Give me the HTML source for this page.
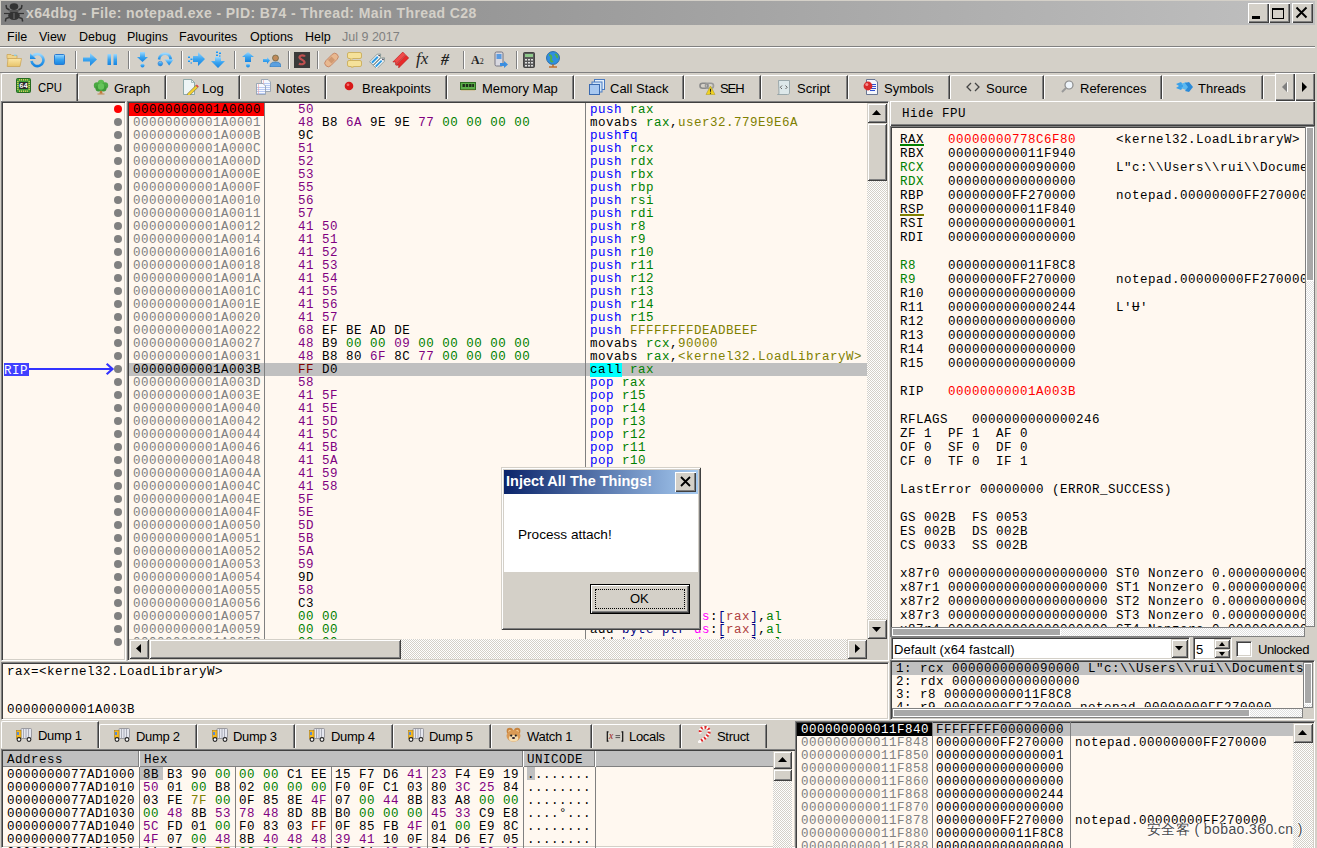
<!DOCTYPE html>
<html><head><meta charset="utf-8"><style>
*{margin:0;padding:0;box-sizing:border-box}
html,body{width:1317px;height:848px;overflow:hidden}
body{background:#d4d0c8;position:relative;font-family:"Liberation Sans",sans-serif;color:#000}
.a{position:absolute}
.s{font-family:"Liberation Sans",sans-serif;font-size:12px;white-space:pre;line-height:14px}
.m{font-family:"Liberation Mono",monospace;font-size:12.5px;letter-spacing:0.5px;white-space:pre;line-height:13px}
.r{font-family:"Liberation Mono",monospace;font-size:12.5px;letter-spacing:0.5px;white-space:pre;line-height:14px}
</style></head><body>
<div class="a" style="left:1px;top:1px;width:1314px;height:24px;background:linear-gradient(to right,#808080,#c0c0c0)"></div>
<div class="a s" style="left:26px;top:5px;color:#d4d0c8;font-weight:bold;font-size:14px;letter-spacing:0.4px;line-height:16px">x64dbg - File: notepad.exe - PID: B74 - Thread: Main Thread C28</div>
<svg class="a" style="left:0px;top:0px" width="28" height="26" viewBox="0 0 28 26">
<g fill="#333" stroke="#333">
<ellipse cx="14" cy="6.6" rx="4.3" ry="3.4" stroke="none"/>
<ellipse cx="14" cy="15.6" rx="5.8" ry="4.4" stroke="none"/>
<rect x="9.5" y="10" width="9" height="2" stroke="none" fill="#555"/>
<path d="M4 13.5h20" stroke-width="1.2" fill="none"/>
<path d="M9.5 10L6.6 8.2 6 5M18.5 10L21.4 8.2 22 5M9 17.5L6 18.5 5.3 21.5M19 17.5L22 18.5 22.7 21.5" stroke-width="1.5" fill="none"/>
</g><path d="M14 13v6" stroke="#6a6a6a" stroke-width="1.2"/></svg>
<div class="a" style="left:1248px;top:3px;width:21px;height:20px;background:#d4d0c8;box-shadow:inset 1px 1px 0 #fff,inset -1px -1px 0 #404040,inset -2px -2px 0 #808080;"></div>
<div class="a" style="left:1269px;top:3px;width:21px;height:20px;background:#d4d0c8;box-shadow:inset 1px 1px 0 #fff,inset -1px -1px 0 #404040,inset -2px -2px 0 #808080;"></div>
<div class="a" style="left:1292px;top:3px;width:21px;height:20px;background:#d4d0c8;box-shadow:inset 1px 1px 0 #fff,inset -1px -1px 0 #404040,inset -2px -2px 0 #808080;"></div>
<div class="a" style="left:1252px;top:16px;width:8px;height:3px;background:#000"></div>
<div class="a" style="left:1272px;top:8px;width:12px;height:11px;border:1px solid #000;border-top-width:2px"></div>
<svg class="a" style="left:1295px;top:6px" width="13" height="13" viewBox="0 0 13 13"><path d="M1.5 1.5L11.5 11.5M11.5 1.5L1.5 11.5" stroke="#000" stroke-width="1.9"/></svg>
<div class="a s" style="left:7px;top:30px;font-size:12.5px">File</div>
<div class="a s" style="left:39px;top:30px;font-size:12.5px">View</div>
<div class="a s" style="left:79px;top:30px;font-size:12.5px">Debug</div>
<div class="a s" style="left:127px;top:30px;font-size:12.5px">Plugins</div>
<div class="a s" style="left:179px;top:30px;font-size:12.5px">Favourites</div>
<div class="a s" style="left:250px;top:30px;font-size:12.5px">Options</div>
<div class="a s" style="left:305px;top:30px;font-size:12.5px">Help</div>
<div class="a s" style="left:342px;top:30px;font-size:12.5px;color:#808080">Jul 9 2017</div>
<div class="a" style="left:0px;top:46px;width:1315px;height:1px;background:#808080"></div>
<div class="a" style="left:0px;top:47px;width:1315px;height:1px;background:#fff"></div>
<svg width="0" height="0" style="position:absolute"><defs><linearGradient id="gb" x1="0" y1="0" x2="0" y2="1"><stop offset="0" stop-color="#9ad8ff"/><stop offset=".5" stop-color="#3aa4f0"/><stop offset="1" stop-color="#1784e0"/></linearGradient><linearGradient id="gf" x1="0" y1="0" x2="0" y2="1"><stop offset="0" stop-color="#fbe7a8"/><stop offset="1" stop-color="#e8c46a"/></linearGradient></defs></svg>
<svg class="a" style="left:6px;top:53px" width="16" height="14" viewBox="0 0 16 14"><path d="M1 1.5h4l1 1h5v3H1z" fill="#f0d48a" stroke="#c8a050" stroke-width=".7"/><rect x="8" y="1.6" width="2.5" height="1.2" fill="#7fd0f0"/><path d="M2 5.5h13.5l-1.5 8H1.2z" fill="url(#gf)" stroke="#c8a050" stroke-width=".7"/></svg>
<svg class="a" style="left:29px;top:52px" width="16" height="16" viewBox="0 0 16 16"><path d="M4 4A6 6 0 1 1 2.5 9" fill="none" stroke="url(#gb)" stroke-width="2.6"/><path d="M1 1v6h6z" fill="url(#gb)"/></svg>
<svg class="a" style="left:54px;top:54px" width="11" height="11" viewBox="0 0 11 11"><rect x=".5" y=".5" width="10" height="10" rx="1" fill="url(#gb)" stroke="#2a7ad0" stroke-width="1"/></svg>
<div class="a" style="left:75px;top:51px;width:1px;height:18px;background:#808080"></div>
<div class="a" style="left:76px;top:51px;width:1px;height:18px;background:#fff"></div>
<svg class="a" style="left:83px;top:53px" width="14" height="13" viewBox="0 0 14 13"><path d="M0 4.5h7V0l7 6.5-7 6.5V8.5H0z" fill="url(#gb)"/></svg>
<svg class="a" style="left:107px;top:54px" width="11" height="11" viewBox="0 0 11 11"><rect x="0.5" y="0" width="3.5" height="11" fill="url(#gb)"/><rect x="6.5" y="0" width="3.5" height="11" fill="url(#gb)"/></svg>
<div class="a" style="left:128px;top:51px;width:1px;height:18px;background:#808080"></div>
<div class="a" style="left:129px;top:51px;width:1px;height:18px;background:#fff"></div>
<svg class="a" style="left:137px;top:52px" width="11" height="16" viewBox="0 0 11 16"><path d="M3 0h5v5h3l-5.5 5L0 5h3z" fill="url(#gb)"/><circle cx="5.5" cy="13.5" r="2" fill="url(#gb)"/></svg>
<svg class="a" style="left:157px;top:52px" width="17" height="15" viewBox="0 0 17 15"><path d="M2 7.5C2.5 3 6 1.5 9 1.8S14 4.5 13.5 8.5" fill="none" stroke="url(#gb)" stroke-width="2.6"/><path d="M7.5 7.3h9.3l-4.7 6.2z" fill="url(#gb)"/><circle cx="3.3" cy="11.6" r="2.3" fill="url(#gb)" stroke="#2a7ad0" stroke-width=".6"/></svg>
<div class="a" style="left:181px;top:51px;width:1px;height:18px;background:#808080"></div>
<div class="a" style="left:182px;top:51px;width:1px;height:18px;background:#fff"></div>
<svg class="a" style="left:187px;top:52px" width="18" height="15" viewBox="0 0 18 15"><path d="M6 4h5V0l7 7-7 7V10H6z" fill="url(#gb)"/><rect x="1" y="4" width="2" height="2" fill="url(#gb)"/><rect x="3.5" y="6" width="2" height="2" fill="url(#gb)"/><rect x="1" y="8" width="2" height="2" fill="url(#gb)"/><rect x="3.5" y="10" width="1.5" height="1.5" fill="url(#gb)"/></svg>
<svg class="a" style="left:211px;top:51px" width="15" height="17" viewBox="0 0 15 17"><path d="M4 6h6v4h4l-7 7-7-7h4z" fill="url(#gb)"/><rect x="5" y="0" width="2" height="2" fill="url(#gb)"/><rect x="8" y="1" width="2" height="2" fill="url(#gb)"/><rect x="5" y="3" width="2" height="2" fill="url(#gb)"/><rect x="8" y="4" width="1.5" height="1.5" fill="url(#gb)"/></svg>
<div class="a" style="left:234px;top:51px;width:1px;height:18px;background:#808080"></div>
<div class="a" style="left:235px;top:51px;width:1px;height:18px;background:#fff"></div>
<svg class="a" style="left:242px;top:52px" width="12" height="16" viewBox="0 0 12 16"><path d="M6 0l6 5H9v5H3V5H0z" fill="url(#gb)"/><circle cx="6" cy="13.5" r="2" fill="url(#gb)"/></svg>
<svg class="a" style="left:263px;top:54px" width="18" height="13" viewBox="0 0 18 13"><path d="M0 5h4V3l3 3.5-3 3.5V8H0z" fill="url(#gb)"/><circle cx="12.5" cy="4" r="3" fill="#c08a5a" stroke="#553" stroke-width=".6"/><path d="M7 13c0-4 2-5 5.5-5s5.5 1 5.5 5z" fill="#5aa0e0" stroke="#2a70b0" stroke-width=".6"/></svg>
<div class="a" style="left:288px;top:51px;width:1px;height:18px;background:#808080"></div>
<div class="a" style="left:289px;top:51px;width:1px;height:18px;background:#fff"></div>
<div class="a" style="left:294px;top:52px;width:16px;height:16px;background:#3a3a3a"></div>
<svg class="a" style="left:294px;top:52px" width="16" height="16" viewBox="0 0 16 16"><path d="M11 4.5C10 3 6 3 5.5 5S10 8 10.5 10 7 13 5 11.5" fill="none" stroke="#c05050" stroke-width="2.2"/></svg>
<div class="a" style="left:317px;top:51px;width:1px;height:18px;background:#808080"></div>
<div class="a" style="left:318px;top:51px;width:1px;height:18px;background:#fff"></div>
<svg class="a" style="left:323px;top:52px" width="17" height="16" viewBox="0 0 17 16"><g transform="rotate(-45 8.5 8)"><rect x="0.5" y="4.5" width="16" height="7" rx="3.5" fill="#e8b890" stroke="#c08060" stroke-width=".8"/><rect x="6" y="5.5" width="5" height="5" fill="#d09870"/></g></svg>
<svg class="a" style="left:347px;top:52px" width="15" height="16" viewBox="0 0 15 16"><rect x="0.5" y="0.5" width="14" height="6" rx="1.5" fill="#f5e19a" stroke="#c8a850" stroke-width=".8"/><rect x="0.5" y="8.5" width="14" height="6" rx="1.5" fill="#f5e19a" stroke="#c8a850" stroke-width=".8"/><path d="M3 6.5l1 2 2-2M4 14.5l1 1.5 2-1.5" fill="#f5e19a" stroke="#c8a850" stroke-width=".6"/></svg>
<svg class="a" style="left:369px;top:51px" width="18" height="17" viewBox="0 0 18 17"><g transform="rotate(-45 9 8.5)"><path d="M1.5 4.2h10.5l2.8 2.3-2.8 2.3H1.5z" fill="#fff" stroke="#6a8080" stroke-width=".7"/><rect x="2.3" y="5.5" width="8.5" height="2" fill="#2e9ae2"/><circle cx="12.6" cy="6.5" r=".8" fill="#334"/><path d="M1.5 9.6h10.5l2.8 2.3-2.8 2.3H1.5z" fill="#fff" stroke="#6a8080" stroke-width=".7"/><rect x="2.3" y="10.9" width="8.5" height="2" fill="#2e9ae2"/><circle cx="12.6" cy="11.9" r=".8" fill="#334"/></g></svg>
<svg class="a" style="left:392px;top:51px" width="18" height="17" viewBox="0 0 18 17"><g transform="rotate(-45 9 8.5)"><path d="M1.5 4.5h14v3.8h-14l2-1.9z" fill="#f04a4a" stroke="#c01818" stroke-width=".6"/><path d="M1.5 9h14v3.8h-14l2-1.9z" fill="#e82a2a" stroke="#b81010" stroke-width=".6"/></g></svg>
<div class="a s" style="left:416px;top:50px;font-family:&quot;Liberation Serif&quot;,serif;font-size:17px;line-height:18px;color:#222"><i>fx</i></div>
<div class="a s" style="left:441px;top:51px;font-family:&quot;Liberation Serif&quot;,serif;font-size:16px;line-height:18px;color:#222;font-style:italic"><b>#</b></div>
<div class="a" style="left:463px;top:51px;width:1px;height:18px;background:#808080"></div>
<div class="a" style="left:464px;top:51px;width:1px;height:18px;background:#fff"></div>
<div class="a s" style="left:471px;top:53px;font-family:&quot;Liberation Serif&quot;,serif;font-size:12px;line-height:14px;color:#222"><b>A</b><span style="font-size:8px">2</span></div>
<svg class="a" style="left:494px;top:51px" width="14" height="17" viewBox="0 0 14 17"><rect x="1" y="1" width="8" height="14" rx="1.5" fill="#d8d8e0" stroke="#606070" stroke-width=".8"/><rect x="2.5" y="3" width="5" height="5" fill="#5a9ae0"/><path d="M6 12h4v-2l4 3.5-4 3.5v-2H6z" fill="#3a8ee0"/></svg>
<div class="a" style="left:516px;top:51px;width:1px;height:18px;background:#808080"></div>
<div class="a" style="left:517px;top:51px;width:1px;height:18px;background:#fff"></div>
<svg class="a" style="left:523px;top:52px" width="12" height="16" viewBox="0 0 12 16"><rect x=".5" y=".5" width="11" height="15" rx="1" fill="#585858" stroke="#303030" stroke-width=".8"/><rect x="2" y="2" width="8" height="3" fill="#8ec88a"/><g fill="#ddd"><rect x="2" y="7" width="2" height="1.5"/><rect x="5" y="7" width="2" height="1.5"/><rect x="8" y="7" width="2" height="1.5"/><rect x="2" y="10" width="2" height="1.5"/><rect x="5" y="10" width="2" height="1.5"/><rect x="8" y="10" width="2" height="1.5"/><rect x="2" y="13" width="2" height="1.5"/><rect x="5" y="13" width="2" height="1.5"/><rect x="8" y="13" width="2" height="1.5"/></g></svg>
<svg class="a" style="left:545px;top:51px" width="16" height="17" viewBox="0 0 16 17"><circle cx="8" cy="7" r="6.5" fill="#2f8fe0" stroke="#1a5fa0" stroke-width=".8"/><path d="M4 4c2 0 3 2 2 4s1 3 2 2M10 3c1 1 3 2 2 4" fill="none" stroke="#4caf50" stroke-width="2"/><path d="M4 16h8M8 13.5v2.5" stroke="#c07030" stroke-width="1.6"/></svg>
<div class="a" style="left:0px;top:72px;width:1315px;height:1px;background:#808080"></div>
<div class="a" style="left:1px;top:73px;width:77px;height:28px;background:#d4d0c8;border-top:1px solid #fff;border-left:1px solid #fff;border-right:1px solid #404040;box-shadow:inset -1px 0 0 #808080;border-top-left-radius:2px"></div>
<div class="a" style="left:78px;top:75px;width:88px;height:24px;background:#d4d0c8;border-top:1px solid #fff;border-left:1px solid #fff;border-right:1px solid #404040;box-shadow:inset -1px 0 0 #808080;border-top-left-radius:2px"></div>
<div class="a" style="left:166px;top:75px;width:74px;height:24px;background:#d4d0c8;border-top:1px solid #fff;border-left:1px solid #fff;border-right:1px solid #404040;box-shadow:inset -1px 0 0 #808080;border-top-left-radius:2px"></div>
<div class="a" style="left:240px;top:75px;width:86px;height:24px;background:#d4d0c8;border-top:1px solid #fff;border-left:1px solid #fff;border-right:1px solid #404040;box-shadow:inset -1px 0 0 #808080;border-top-left-radius:2px"></div>
<div class="a" style="left:326px;top:75px;width:121px;height:24px;background:#d4d0c8;border-top:1px solid #fff;border-left:1px solid #fff;border-right:1px solid #404040;box-shadow:inset -1px 0 0 #808080;border-top-left-radius:2px"></div>
<div class="a" style="left:447px;top:75px;width:127px;height:24px;background:#d4d0c8;border-top:1px solid #fff;border-left:1px solid #fff;border-right:1px solid #404040;box-shadow:inset -1px 0 0 #808080;border-top-left-radius:2px"></div>
<div class="a" style="left:574px;top:75px;width:110px;height:24px;background:#d4d0c8;border-top:1px solid #fff;border-left:1px solid #fff;border-right:1px solid #404040;box-shadow:inset -1px 0 0 #808080;border-top-left-radius:2px"></div>
<div class="a" style="left:684px;top:75px;width:77px;height:24px;background:#d4d0c8;border-top:1px solid #fff;border-left:1px solid #fff;border-right:1px solid #404040;box-shadow:inset -1px 0 0 #808080;border-top-left-radius:2px"></div>
<div class="a" style="left:761px;top:75px;width:87px;height:24px;background:#d4d0c8;border-top:1px solid #fff;border-left:1px solid #fff;border-right:1px solid #404040;box-shadow:inset -1px 0 0 #808080;border-top-left-radius:2px"></div>
<div class="a" style="left:848px;top:75px;width:102px;height:24px;background:#d4d0c8;border-top:1px solid #fff;border-left:1px solid #fff;border-right:1px solid #404040;box-shadow:inset -1px 0 0 #808080;border-top-left-radius:2px"></div>
<div class="a" style="left:950px;top:75px;width:94px;height:24px;background:#d4d0c8;border-top:1px solid #fff;border-left:1px solid #fff;border-right:1px solid #404040;box-shadow:inset -1px 0 0 #808080;border-top-left-radius:2px"></div>
<div class="a" style="left:1044px;top:75px;width:118px;height:24px;background:#d4d0c8;border-top:1px solid #fff;border-left:1px solid #fff;border-right:1px solid #404040;box-shadow:inset -1px 0 0 #808080;border-top-left-radius:2px"></div>
<div class="a" style="left:1162px;top:75px;width:101px;height:24px;background:#d4d0c8;border-top:1px solid #fff;border-left:1px solid #fff;border-right:1px solid #404040;box-shadow:inset -1px 0 0 #808080;border-top-left-radius:2px"></div>
<div class="a" style="left:1263px;top:75px;width:28px;height:24px;background:#d4d0c8;border-top:1px solid #fff;border-left:1px solid #fff;border-right:1px solid #404040;box-shadow:inset -1px 0 0 #808080;border-top-left-radius:2px"></div>
<div class="a" style="left:1263px;top:72px;width:52px;height:1px;background:#808080"></div>
<div class="a" style="left:1275px;top:73px;width:20px;height:28px;background:#d4d0c8;box-shadow:inset 1px 1px 0 #fff,inset -1px -1px 0 #404040,inset -2px -2px 0 #808080;"></div>
<div class="a" style="left:1295px;top:73px;width:20px;height:28px;background:#d4d0c8;box-shadow:inset 1px 1px 0 #fff,inset -1px -1px 0 #404040,inset -2px -2px 0 #808080;"></div>
<svg class="a" style="left:1281px;top:81px" width="8" height="12" viewBox="0 0 8 12"><path d="M6 1v10L1 6z" fill="#808080"/><path d="M6.5 1v10" stroke="#fff" stroke-width="1"/></svg>
<svg class="a" style="left:1301px;top:81px" width="8" height="12" viewBox="0 0 8 12"><path d="M1 1v10L6 6z" fill="#000"/></svg>
<svg class="a" style="left:16px;top:78px" width="15" height="15" viewBox="0 0 15 15"><rect x=".5" y=".5" width="14" height="14" rx="1" fill="#3c9a34" stroke="#256a20"/><rect x="3.2" y="1" width=".9" height="1.6" fill="#e8d060"/><rect x="3.2" y="12.4" width=".9" height="1.6" fill="#e8d060"/><rect y="3.2" x="1" height=".9" width="1.6" fill="#e8d060"/><rect y="3.2" x="12.4" height=".9" width="1.6" fill="#e8d060"/><rect x="5.1" y="1" width=".9" height="1.6" fill="#e8d060"/><rect x="5.1" y="12.4" width=".9" height="1.6" fill="#e8d060"/><rect y="5.1" x="1" height=".9" width="1.6" fill="#e8d060"/><rect y="5.1" x="12.4" height=".9" width="1.6" fill="#e8d060"/><rect x="7.0" y="1" width=".9" height="1.6" fill="#e8d060"/><rect x="7.0" y="12.4" width=".9" height="1.6" fill="#e8d060"/><rect y="7.0" x="1" height=".9" width="1.6" fill="#e8d060"/><rect y="7.0" x="12.4" height=".9" width="1.6" fill="#e8d060"/><rect x="8.9" y="1" width=".9" height="1.6" fill="#e8d060"/><rect x="8.9" y="12.4" width=".9" height="1.6" fill="#e8d060"/><rect y="8.9" x="1" height=".9" width="1.6" fill="#e8d060"/><rect y="8.9" x="12.4" height=".9" width="1.6" fill="#e8d060"/><rect x="10.8" y="1" width=".9" height="1.6" fill="#e8d060"/><rect x="10.8" y="12.4" width=".9" height="1.6" fill="#e8d060"/><rect y="10.8" x="1" height=".9" width="1.6" fill="#e8d060"/><rect y="10.8" x="12.4" height=".9" width="1.6" fill="#e8d060"/><rect x="3.2" y="4" width="8.6" height="7" fill="#2a2a2a"/><text x="7.5" y="10.2" font-size="7.2" fill="#fff" text-anchor="middle" font-family="Liberation Mono" font-weight="bold">64</text></svg>
<div class="a s" style="left:38px;top:80px;font-size:13px;letter-spacing:0px;line-height:15px;transform:scaleX(0.87);transform-origin:0 0;">CPU</div>
<svg class="a" style="left:93px;top:79px" width="16" height="16" viewBox="0 0 16 16"><path d="M7 11.5l-.6 3.3h3.2l-.6-3.3z" fill="#c07a38"/><path d="M4.5 15h7" stroke="#c08850" stroke-width="1"/><circle cx="8" cy="4" r="3.2" fill="#5cbc50"/><circle cx="4" cy="6.5" r="3.2" fill="#4aa842"/><circle cx="12" cy="6.5" r="3.2" fill="#4aa842"/><circle cx="5.5" cy="9.5" r="3" fill="#3e9a38"/><circle cx="10.5" cy="9.5" r="3" fill="#3e9a38"/><circle cx="8" cy="7.5" r="3.2" fill="#66c45a"/></svg>
<div class="a s" style="left:114px;top:81px;font-size:13px;letter-spacing:0px;line-height:15px;">Graph</div>
<svg class="a" style="left:182px;top:79px" width="17" height="16" viewBox="0 0 17 16"><path d="M1.5 .5h8l3 3v12h-11z" fill="#eef5f6" stroke="#7a9a9a" stroke-width=".8"/><path d="M9.5 .5v3h3" fill="none" stroke="#7a9a9a" stroke-width=".6"/><path d="M5 15.2L13.8 6.5l2 2-8.8 8.7z" fill="#f2d030" stroke="#554" stroke-width=".5"/><path d="M13.8 6.5l2 2 1-1-2-2z" fill="#e04040"/></svg>
<div class="a s" style="left:202px;top:81px;font-size:13px;letter-spacing:0px;line-height:15px;">Log</div>
<svg class="a" style="left:256px;top:79px" width="15" height="16" viewBox="0 0 15 16"><path d="M5.5 .5h6.5l2.5 2.5v9.5h-9z" fill="#f4f8ff" stroke="#8a98a8" stroke-width=".8"/><path d="M6 4.5h8M6 6.5h8M6 8.5h8M6 10.5h8" stroke="#a8bef0" stroke-width=".8"/><path d="M7.5 1v11" stroke="#f0a0a0" stroke-width=".6"/><path d="M.5 4.5h6.5l2.5 2.5v8.5h-9z" fill="#f8faff" stroke="#8a98a8" stroke-width=".8"/><path d="M1 8.5h8M1 10.5h8M1 12.5h8M1 14.5h8" stroke="#a8bef0" stroke-width=".8"/><path d="M2.5 5v10.5" stroke="#f0a0a0" stroke-width=".6"/></svg>
<div class="a s" style="left:276px;top:81px;font-size:13px;letter-spacing:0px;line-height:15px;">Notes</div>
<svg class="a" style="left:344px;top:81px" width="10" height="10" viewBox="0 0 10 10"><circle cx="5" cy="5" r="4.3" fill="#d81818"/><circle cx="4" cy="3.8" r="1.4" fill="#f06a6a"/></svg>
<div class="a s" style="left:362px;top:81px;font-size:13px;letter-spacing:0px;line-height:15px;">Breakpoints</div>
<svg class="a" style="left:460px;top:82px" width="16" height="9" viewBox="0 0 16 9"><rect x=".5" y=".5" width="15" height="7" fill="#5cae4a" stroke="#2e6e22"/><rect x="2.5" y="2" width="2.4" height="3" fill="#1e2e1a"/><rect x="5.8" y="2" width="2.4" height="3" fill="#1e2e1a"/><rect x="9.1" y="2" width="2.4" height="3" fill="#1e2e1a"/><rect x="12.2" y="2" width="1.8" height="3" fill="#1e2e1a"/><path d="M2 7.5v1.2M4 7.5v1.2M6 7.5v1.2M8 7.5v1.2M10 7.5v1.2M12 7.5v1.2M14 7.5v1.2" stroke="#c8a040" stroke-width=".8"/></svg>
<div class="a s" style="left:482px;top:81px;font-size:13px;letter-spacing:0px;line-height:15px;">Memory Map</div>
<svg class="a" style="left:589px;top:79px" width="16" height="16" viewBox="0 0 16 16"><rect x="5.5" y=".5" width="10" height="10" fill="#e6f0fa" stroke="#4a7ac0"/><rect x="3" y="3" width="10" height="10" fill="#d0e4f8" stroke="#4a7ac0"/><rect x=".5" y="5.5" width="10" height="10" fill="#a8c8f0" stroke="#3a6ab0"/></svg>
<div class="a s" style="left:610px;top:81px;font-size:13px;letter-spacing:0px;line-height:15px;">Call Stack</div>
<svg class="a" style="left:699px;top:82px" width="17" height="13" viewBox="0 0 17 13"><rect x="1" y="1.2" width="8" height="5" rx="2.5" fill="none" stroke="#8a8a8a" stroke-width="1.6"/><rect x="6.5" y="1.2" width="8" height="5" rx="2.5" fill="none" stroke="#9a9a9a" stroke-width="1.6"/><path d="M11.5 4L16 12.5H7z" fill="#f2d320" stroke="#b0a030" stroke-width=".6"/><path d="M11.5 6.8v3M11.5 10.8v1" stroke="#222" stroke-width="1.1"/></svg>
<div class="a s" style="left:720px;top:81px;font-size:13px;letter-spacing:-1.1px;line-height:15px;">SEH</div>
<svg class="a" style="left:776px;top:79px" width="15" height="16" viewBox="0 0 15 16"><path d="M2.5 1.5h11v12.5c0 1-1 1.5-2 1.5H1.5c1 0 1.5-.8 1.5-1.5z" fill="#dde8ea" stroke="#8a9aa0" stroke-width=".8"/><path d="M6 6.5L4.3 8.3 6 10M9.5 6.5l1.7 1.8L9.5 10" fill="none" stroke="#555" stroke-width=".9"/></svg>
<div class="a s" style="left:797px;top:81px;font-size:13px;letter-spacing:0px;line-height:15px;">Script</div>
<svg class="a" style="left:863px;top:79px" width="16" height="16" viewBox="0 0 16 16"><path d="M3.5 .5h8.5l2.5 2.5v12.5h-11z" fill="#f4f6fb" stroke="#5a6a8a" stroke-width=".9"/><path d="M7 5.5h6M7 7.5h6M7 9.5h6M7 11.5h5" stroke="#3050d0" stroke-width="1"/><circle cx="5" cy="7" r="4.4" fill="#d82a2a"/><circle cx="3.8" cy="5.6" r="1.5" fill="#f59090"/></svg>
<div class="a s" style="left:884px;top:81px;font-size:13px;letter-spacing:0px;line-height:15px;">Symbols</div>
<svg class="a" style="left:966px;top:82px" width="14" height="10" viewBox="0 0 14 10"><path d="M5 1L1 5l4 4M9 1l4 4-4 4" fill="none" stroke="#444" stroke-width="1.3"/></svg>
<div class="a s" style="left:986px;top:81px;font-size:13px;letter-spacing:0px;line-height:15px;">Source</div>
<svg class="a" style="left:1061px;top:80px" width="13" height="13" viewBox="0 0 13 13"><circle cx="8" cy="5" r="4" fill="#eef4fa" stroke="#8a8a8a" stroke-width="1.2"/><path d="M5 8L1 12" stroke="#999" stroke-width="2"/></svg>
<div class="a s" style="left:1080px;top:81px;font-size:13px;letter-spacing:0px;line-height:15px;">References</div>
<svg class="a" style="left:1176px;top:81px" width="17" height="12" viewBox="0 0 17 12"><path d="M0 3l5 -2 3 4-3 4-5-2 3-2z" fill="#3aa0e8"/><path d="M5 3l5-2 3 4-3 4-5-2 3-2z" fill="#5ab8f0"/><path d="M9 2l4-1 4 5-4 5-4-1 3-4z" fill="#2a8ad8"/></svg>
<div class="a s" style="left:1198px;top:81px;font-size:13px;letter-spacing:0px;line-height:15px;">Threads</div>
<div class="a" style="left:1px;top:101px;width:125px;height:560px;background:#fff8f0;border-top:1px solid #808080;border-left:1px solid #808080;border-bottom:1px solid #fff;border-right:1px solid #fff;box-shadow:inset 1px 1px 0 #404040,inset -1px -1px 0 #d4d0c8"></div>
<div class="a" style="left:127px;top:101px;width:762px;height:560px;background:#fff8f0;border-top:1px solid #808080;border-left:1px solid #808080;border-bottom:1px solid #fff;border-right:1px solid #fff;box-shadow:inset 1px 1px 0 #404040,inset -1px -1px 0 #d4d0c8"></div>
<div class="a" style="left:129px;top:103px;width:738px;height:536px;overflow:hidden">
<div class="a" style="left:0px;top:0px;width:135px;height:13px;background:#ff0000"></div>
<div class="a m" style="left:4px;top:1px;"><span style="color:#000">00000000001A0000</span></div>
<div class="a m" style="left:169px;top:1px;"><span style="color:#800080">50</span></div>
<div class="a m" style="left:461px;top:1px;"><span style="color:#0000ff">push</span> <span style="color:#008000">rax</span></div>
<div class="a m" style="left:4px;top:14px;"><span style="color:#808080">00000000001A0001</span></div>
<div class="a m" style="left:169px;top:14px;"><span style="color:#800080">48</span> <span style="color:#000">B8</span> <span style="color:#800080">6A</span> <span style="color:#000">9E</span> <span style="color:#000">9E</span> <span style="color:#800080">77</span> <span style="color:#008000">00</span> <span style="color:#008000">00</span> <span style="color:#008000">00</span> <span style="color:#008000">00</span></div>
<div class="a m" style="left:461px;top:14px;"><span style="color:#000">movabs</span> <span style="color:#008000">rax</span><span style="color:#000">,</span><span style="color:#808000">user32.779E9E6A</span></div>
<div class="a m" style="left:4px;top:27px;"><span style="color:#808080">00000000001A000B</span></div>
<div class="a m" style="left:169px;top:27px;"><span style="color:#000">9C</span></div>
<div class="a m" style="left:461px;top:27px;"><span style="color:#0000ff">pushfq</span></div>
<div class="a m" style="left:4px;top:40px;"><span style="color:#808080">00000000001A000C</span></div>
<div class="a m" style="left:169px;top:40px;"><span style="color:#800080">51</span></div>
<div class="a m" style="left:461px;top:40px;"><span style="color:#0000ff">push</span> <span style="color:#008000">rcx</span></div>
<div class="a m" style="left:4px;top:53px;"><span style="color:#808080">00000000001A000D</span></div>
<div class="a m" style="left:169px;top:53px;"><span style="color:#800080">52</span></div>
<div class="a m" style="left:461px;top:53px;"><span style="color:#0000ff">push</span> <span style="color:#008000">rdx</span></div>
<div class="a m" style="left:4px;top:66px;"><span style="color:#808080">00000000001A000E</span></div>
<div class="a m" style="left:169px;top:66px;"><span style="color:#800080">53</span></div>
<div class="a m" style="left:461px;top:66px;"><span style="color:#0000ff">push</span> <span style="color:#008000">rbx</span></div>
<div class="a m" style="left:4px;top:79px;"><span style="color:#808080">00000000001A000F</span></div>
<div class="a m" style="left:169px;top:79px;"><span style="color:#800080">55</span></div>
<div class="a m" style="left:461px;top:79px;"><span style="color:#0000ff">push</span> <span style="color:#008000">rbp</span></div>
<div class="a m" style="left:4px;top:92px;"><span style="color:#808080">00000000001A0010</span></div>
<div class="a m" style="left:169px;top:92px;"><span style="color:#800080">56</span></div>
<div class="a m" style="left:461px;top:92px;"><span style="color:#0000ff">push</span> <span style="color:#008000">rsi</span></div>
<div class="a m" style="left:4px;top:105px;"><span style="color:#808080">00000000001A0011</span></div>
<div class="a m" style="left:169px;top:105px;"><span style="color:#800080">57</span></div>
<div class="a m" style="left:461px;top:105px;"><span style="color:#0000ff">push</span> <span style="color:#008000">rdi</span></div>
<div class="a m" style="left:4px;top:118px;"><span style="color:#808080">00000000001A0012</span></div>
<div class="a m" style="left:169px;top:118px;"><span style="color:#800080">41</span> <span style="color:#800080">50</span></div>
<div class="a m" style="left:461px;top:118px;"><span style="color:#0000ff">push</span> <span style="color:#008000">r8</span></div>
<div class="a m" style="left:4px;top:131px;"><span style="color:#808080">00000000001A0014</span></div>
<div class="a m" style="left:169px;top:131px;"><span style="color:#800080">41</span> <span style="color:#800080">51</span></div>
<div class="a m" style="left:461px;top:131px;"><span style="color:#0000ff">push</span> <span style="color:#008000">r9</span></div>
<div class="a m" style="left:4px;top:144px;"><span style="color:#808080">00000000001A0016</span></div>
<div class="a m" style="left:169px;top:144px;"><span style="color:#800080">41</span> <span style="color:#800080">52</span></div>
<div class="a m" style="left:461px;top:144px;"><span style="color:#0000ff">push</span> <span style="color:#008000">r10</span></div>
<div class="a m" style="left:4px;top:157px;"><span style="color:#808080">00000000001A0018</span></div>
<div class="a m" style="left:169px;top:157px;"><span style="color:#800080">41</span> <span style="color:#800080">53</span></div>
<div class="a m" style="left:461px;top:157px;"><span style="color:#0000ff">push</span> <span style="color:#008000">r11</span></div>
<div class="a m" style="left:4px;top:170px;"><span style="color:#808080">00000000001A001A</span></div>
<div class="a m" style="left:169px;top:170px;"><span style="color:#800080">41</span> <span style="color:#800080">54</span></div>
<div class="a m" style="left:461px;top:170px;"><span style="color:#0000ff">push</span> <span style="color:#008000">r12</span></div>
<div class="a m" style="left:4px;top:183px;"><span style="color:#808080">00000000001A001C</span></div>
<div class="a m" style="left:169px;top:183px;"><span style="color:#800080">41</span> <span style="color:#800080">55</span></div>
<div class="a m" style="left:461px;top:183px;"><span style="color:#0000ff">push</span> <span style="color:#008000">r13</span></div>
<div class="a m" style="left:4px;top:196px;"><span style="color:#808080">00000000001A001E</span></div>
<div class="a m" style="left:169px;top:196px;"><span style="color:#800080">41</span> <span style="color:#800080">56</span></div>
<div class="a m" style="left:461px;top:196px;"><span style="color:#0000ff">push</span> <span style="color:#008000">r14</span></div>
<div class="a m" style="left:4px;top:209px;"><span style="color:#808080">00000000001A0020</span></div>
<div class="a m" style="left:169px;top:209px;"><span style="color:#800080">41</span> <span style="color:#800080">57</span></div>
<div class="a m" style="left:461px;top:209px;"><span style="color:#0000ff">push</span> <span style="color:#008000">r15</span></div>
<div class="a m" style="left:4px;top:222px;"><span style="color:#808080">00000000001A0022</span></div>
<div class="a m" style="left:169px;top:222px;"><span style="color:#800080">68</span> <span style="color:#000">EF</span> <span style="color:#000">BE</span> <span style="color:#000">AD</span> <span style="color:#000">DE</span></div>
<div class="a m" style="left:461px;top:222px;"><span style="color:#0000ff">push</span> <span style="color:#808000">FFFFFFFFDEADBEEF</span></div>
<div class="a m" style="left:4px;top:235px;"><span style="color:#808080">00000000001A0027</span></div>
<div class="a m" style="left:169px;top:235px;"><span style="color:#800080">48</span> <span style="color:#000">B9</span> <span style="color:#008000">00</span> <span style="color:#008000">00</span> <span style="color:#800080">09</span> <span style="color:#008000">00</span> <span style="color:#008000">00</span> <span style="color:#008000">00</span> <span style="color:#008000">00</span> <span style="color:#008000">00</span></div>
<div class="a m" style="left:461px;top:235px;"><span style="color:#000">movabs</span> <span style="color:#008000">rcx</span><span style="color:#000">,</span><span style="color:#808000">90000</span></div>
<div class="a m" style="left:4px;top:248px;"><span style="color:#808080">00000000001A0031</span></div>
<div class="a m" style="left:169px;top:248px;"><span style="color:#800080">48</span> <span style="color:#000">B8</span> <span style="color:#000">80</span> <span style="color:#800080">6F</span> <span style="color:#000">8C</span> <span style="color:#800080">77</span> <span style="color:#008000">00</span> <span style="color:#008000">00</span> <span style="color:#008000">00</span> <span style="color:#008000">00</span></div>
<div class="a m" style="left:461px;top:248px;"><span style="color:#000">movabs</span> <span style="color:#008000">rax</span><span style="color:#000">,</span><span style="color:#808000">&lt;kernel32.LoadLibraryW&gt;</span></div>
<div class="a" style="left:0px;top:260px;width:738px;height:13px;background:#c0c0c0"></div>
<div class="a m" style="left:4px;top:261px;"><span style="color:#000">00000000001A003B</span></div>
<div class="a m" style="left:169px;top:261px;"><span style="color:#800000">FF</span> <span style="color:#000">D0</span></div>
<div class="a m" style="left:461px;top:261px;"><span style="color:#000;background:#00ffff">call</span> <span style="color:#008000">rax</span></div>
<div class="a m" style="left:4px;top:274px;"><span style="color:#808080">00000000001A003D</span></div>
<div class="a m" style="left:169px;top:274px;"><span style="color:#800080">58</span></div>
<div class="a m" style="left:461px;top:274px;"><span style="color:#0000ff">pop</span> <span style="color:#008000">rax</span></div>
<div class="a m" style="left:4px;top:287px;"><span style="color:#808080">00000000001A003E</span></div>
<div class="a m" style="left:169px;top:287px;"><span style="color:#800080">41</span> <span style="color:#800080">5F</span></div>
<div class="a m" style="left:461px;top:287px;"><span style="color:#0000ff">pop</span> <span style="color:#008000">r15</span></div>
<div class="a m" style="left:4px;top:300px;"><span style="color:#808080">00000000001A0040</span></div>
<div class="a m" style="left:169px;top:300px;"><span style="color:#800080">41</span> <span style="color:#800080">5E</span></div>
<div class="a m" style="left:461px;top:300px;"><span style="color:#0000ff">pop</span> <span style="color:#008000">r14</span></div>
<div class="a m" style="left:4px;top:313px;"><span style="color:#808080">00000000001A0042</span></div>
<div class="a m" style="left:169px;top:313px;"><span style="color:#800080">41</span> <span style="color:#800080">5D</span></div>
<div class="a m" style="left:461px;top:313px;"><span style="color:#0000ff">pop</span> <span style="color:#008000">r13</span></div>
<div class="a m" style="left:4px;top:326px;"><span style="color:#808080">00000000001A0044</span></div>
<div class="a m" style="left:169px;top:326px;"><span style="color:#800080">41</span> <span style="color:#800080">5C</span></div>
<div class="a m" style="left:461px;top:326px;"><span style="color:#0000ff">pop</span> <span style="color:#008000">r12</span></div>
<div class="a m" style="left:4px;top:339px;"><span style="color:#808080">00000000001A0046</span></div>
<div class="a m" style="left:169px;top:339px;"><span style="color:#800080">41</span> <span style="color:#800080">5B</span></div>
<div class="a m" style="left:461px;top:339px;"><span style="color:#0000ff">pop</span> <span style="color:#008000">r11</span></div>
<div class="a m" style="left:4px;top:352px;"><span style="color:#808080">00000000001A0048</span></div>
<div class="a m" style="left:169px;top:352px;"><span style="color:#800080">41</span> <span style="color:#800080">5A</span></div>
<div class="a m" style="left:461px;top:352px;"><span style="color:#0000ff">pop</span> <span style="color:#008000">r10</span></div>
<div class="a m" style="left:4px;top:365px;"><span style="color:#808080">00000000001A004A</span></div>
<div class="a m" style="left:169px;top:365px;"><span style="color:#800080">41</span> <span style="color:#800080">59</span></div>
<div class="a m" style="left:461px;top:365px;"><span style="color:#0000ff">pop</span> <span style="color:#008000">r9</span></div>
<div class="a m" style="left:4px;top:378px;"><span style="color:#808080">00000000001A004C</span></div>
<div class="a m" style="left:169px;top:378px;"><span style="color:#800080">41</span> <span style="color:#800080">58</span></div>
<div class="a m" style="left:461px;top:378px;"><span style="color:#0000ff">pop</span> <span style="color:#008000">r8</span></div>
<div class="a m" style="left:4px;top:391px;"><span style="color:#808080">00000000001A004E</span></div>
<div class="a m" style="left:169px;top:391px;"><span style="color:#800080">5F</span></div>
<div class="a m" style="left:461px;top:391px;"><span style="color:#0000ff">pop</span> <span style="color:#008000">rdi</span></div>
<div class="a m" style="left:4px;top:404px;"><span style="color:#808080">00000000001A004F</span></div>
<div class="a m" style="left:169px;top:404px;"><span style="color:#800080">5E</span></div>
<div class="a m" style="left:461px;top:404px;"><span style="color:#0000ff">pop</span> <span style="color:#008000">rsi</span></div>
<div class="a m" style="left:4px;top:417px;"><span style="color:#808080">00000000001A0050</span></div>
<div class="a m" style="left:169px;top:417px;"><span style="color:#800080">5D</span></div>
<div class="a m" style="left:461px;top:417px;"><span style="color:#0000ff">pop</span> <span style="color:#008000">rbp</span></div>
<div class="a m" style="left:4px;top:430px;"><span style="color:#808080">00000000001A0051</span></div>
<div class="a m" style="left:169px;top:430px;"><span style="color:#800080">5B</span></div>
<div class="a m" style="left:461px;top:430px;"><span style="color:#0000ff">pop</span> <span style="color:#008000">rbx</span></div>
<div class="a m" style="left:4px;top:443px;"><span style="color:#808080">00000000001A0052</span></div>
<div class="a m" style="left:169px;top:443px;"><span style="color:#800080">5A</span></div>
<div class="a m" style="left:461px;top:443px;"><span style="color:#0000ff">pop</span> <span style="color:#008000">rdx</span></div>
<div class="a m" style="left:4px;top:456px;"><span style="color:#808080">00000000001A0053</span></div>
<div class="a m" style="left:169px;top:456px;"><span style="color:#800080">59</span></div>
<div class="a m" style="left:461px;top:456px;"><span style="color:#0000ff">pop</span> <span style="color:#008000">rcx</span></div>
<div class="a m" style="left:4px;top:469px;"><span style="color:#808080">00000000001A0054</span></div>
<div class="a m" style="left:169px;top:469px;"><span style="color:#000">9D</span></div>
<div class="a m" style="left:461px;top:469px;"><span style="color:#0000ff">popfq</span></div>
<div class="a m" style="left:4px;top:482px;"><span style="color:#808080">00000000001A0055</span></div>
<div class="a m" style="left:169px;top:482px;"><span style="color:#800080">58</span></div>
<div class="a m" style="left:461px;top:482px;"><span style="color:#0000ff">pop</span> <span style="color:#008000">rax</span></div>
<div class="a m" style="left:4px;top:495px;"><span style="color:#808080">00000000001A0056</span></div>
<div class="a m" style="left:169px;top:495px;"><span style="color:#000">C3</span></div>
<div class="a m" style="left:461px;top:495px;"><span style="color:#000">ret</span></div>
<div class="a m" style="left:4px;top:508px;"><span style="color:#808080">00000000001A0057</span></div>
<div class="a m" style="left:169px;top:508px;"><span style="color:#008000">00</span> <span style="color:#008000">00</span></div>
<div class="a m" style="left:461px;top:508px;"><span style="color:#000">add</span> <span style="color:#000080">byte ptr</span> <span style="color:#ff00ff">ds</span><span style="color:#000">:</span><span style="color:#000080">[</span><span style="color:#b04040">rax</span><span style="color:#000080">]</span><span style="color:#000">,</span><span style="color:#008000">al</span></div>
<div class="a m" style="left:4px;top:521px;"><span style="color:#808080">00000000001A0059</span></div>
<div class="a m" style="left:169px;top:521px;"><span style="color:#008000">00</span> <span style="color:#008000">00</span></div>
<div class="a m" style="left:461px;top:521px;"><span style="color:#000">add</span> <span style="color:#000080">byte ptr</span> <span style="color:#ff00ff">ds</span><span style="color:#000">:</span><span style="color:#000080">[</span><span style="color:#b04040">rax</span><span style="color:#000080">]</span><span style="color:#000">,</span><span style="color:#008000">al</span></div>
<div class="a m" style="left:4px;top:534px;"><span style="color:#808080">00000000001A005B</span></div>
<div class="a m" style="left:169px;top:534px;"><span style="color:#008000">00</span> <span style="color:#008000">00</span></div>
<div class="a m" style="left:461px;top:534px;"><span style="color:#000">add</span> <span style="color:#000080">byte ptr</span> <span style="color:#ff00ff">ds</span><span style="color:#000">:</span><span style="color:#000080">[</span><span style="color:#b04040">rax</span><span style="color:#000080">]</span><span style="color:#000">,</span><span style="color:#008000">al</span></div>
<div class="a" style="left:135px;top:0px;width:1px;height:537px;background:#808080"></div>
<div class="a" style="left:456px;top:0px;width:1px;height:537px;background:#808080"></div>
</div>
<div class="a" style="left:114px;top:105px;width:8px;height:8px;border-radius:50%;background:#ff0000"></div>
<div class="a" style="left:114px;top:118px;width:8px;height:8px;border-radius:50%;background:#808080"></div>
<div class="a" style="left:114px;top:131px;width:8px;height:8px;border-radius:50%;background:#808080"></div>
<div class="a" style="left:114px;top:144px;width:8px;height:8px;border-radius:50%;background:#808080"></div>
<div class="a" style="left:114px;top:157px;width:8px;height:8px;border-radius:50%;background:#808080"></div>
<div class="a" style="left:114px;top:170px;width:8px;height:8px;border-radius:50%;background:#808080"></div>
<div class="a" style="left:114px;top:183px;width:8px;height:8px;border-radius:50%;background:#808080"></div>
<div class="a" style="left:114px;top:196px;width:8px;height:8px;border-radius:50%;background:#808080"></div>
<div class="a" style="left:114px;top:209px;width:8px;height:8px;border-radius:50%;background:#808080"></div>
<div class="a" style="left:114px;top:222px;width:8px;height:8px;border-radius:50%;background:#808080"></div>
<div class="a" style="left:114px;top:235px;width:8px;height:8px;border-radius:50%;background:#808080"></div>
<div class="a" style="left:114px;top:248px;width:8px;height:8px;border-radius:50%;background:#808080"></div>
<div class="a" style="left:114px;top:261px;width:8px;height:8px;border-radius:50%;background:#808080"></div>
<div class="a" style="left:114px;top:274px;width:8px;height:8px;border-radius:50%;background:#808080"></div>
<div class="a" style="left:114px;top:287px;width:8px;height:8px;border-radius:50%;background:#808080"></div>
<div class="a" style="left:114px;top:300px;width:8px;height:8px;border-radius:50%;background:#808080"></div>
<div class="a" style="left:114px;top:313px;width:8px;height:8px;border-radius:50%;background:#808080"></div>
<div class="a" style="left:114px;top:326px;width:8px;height:8px;border-radius:50%;background:#808080"></div>
<div class="a" style="left:114px;top:339px;width:8px;height:8px;border-radius:50%;background:#808080"></div>
<div class="a" style="left:114px;top:352px;width:8px;height:8px;border-radius:50%;background:#808080"></div>
<div class="a" style="left:114px;top:365px;width:8px;height:8px;border-radius:50%;background:#808080"></div>
<div class="a" style="left:114px;top:378px;width:8px;height:8px;border-radius:50%;background:#808080"></div>
<div class="a" style="left:114px;top:391px;width:8px;height:8px;border-radius:50%;background:#808080"></div>
<div class="a" style="left:114px;top:404px;width:8px;height:8px;border-radius:50%;background:#808080"></div>
<div class="a" style="left:114px;top:417px;width:8px;height:8px;border-radius:50%;background:#808080"></div>
<div class="a" style="left:114px;top:430px;width:8px;height:8px;border-radius:50%;background:#808080"></div>
<div class="a" style="left:114px;top:443px;width:8px;height:8px;border-radius:50%;background:#808080"></div>
<div class="a" style="left:114px;top:456px;width:8px;height:8px;border-radius:50%;background:#808080"></div>
<div class="a" style="left:114px;top:469px;width:8px;height:8px;border-radius:50%;background:#808080"></div>
<div class="a" style="left:114px;top:482px;width:8px;height:8px;border-radius:50%;background:#808080"></div>
<div class="a" style="left:114px;top:495px;width:8px;height:8px;border-radius:50%;background:#808080"></div>
<div class="a" style="left:114px;top:508px;width:8px;height:8px;border-radius:50%;background:#808080"></div>
<div class="a" style="left:114px;top:521px;width:8px;height:8px;border-radius:50%;background:#808080"></div>
<div class="a" style="left:114px;top:534px;width:8px;height:8px;border-radius:50%;background:#808080"></div>
<div class="a" style="left:114px;top:547px;width:8px;height:8px;border-radius:50%;background:#808080"></div>
<div class="a" style="left:114px;top:560px;width:8px;height:8px;border-radius:50%;background:#808080"></div>
<div class="a" style="left:114px;top:573px;width:8px;height:8px;border-radius:50%;background:#808080"></div>
<div class="a" style="left:114px;top:586px;width:8px;height:8px;border-radius:50%;background:#808080"></div>
<div class="a" style="left:114px;top:599px;width:8px;height:8px;border-radius:50%;background:#808080"></div>
<div class="a" style="left:114px;top:612px;width:8px;height:8px;border-radius:50%;background:#808080"></div>
<div class="a" style="left:114px;top:625px;width:8px;height:8px;border-radius:50%;background:#808080"></div>
<div class="a" style="left:114px;top:638px;width:8px;height:8px;border-radius:50%;background:#808080"></div>
<div class="a" style="left:4px;top:363px;width:25px;height:13px;background:#4040ff"></div>
<div class="a m" style="left:4px;top:365px;color:#fff">RIP</div>
<div class="a" style="left:29px;top:368px;width:83px;height:2px;background:#3333ff"></div>
<svg class="a" style="left:105px;top:362px" width="10" height="14" viewBox="0 0 10 14"><path d="M2.5 2.5L7.5 7 2.5 11.5" fill="none" stroke="#3333ff" stroke-width="2.2" stroke-linecap="square"/></svg>
<div class="a" style="left:867px;top:103px;width:20px;height:20px;background:#d4d0c8;box-shadow:inset 1px 1px 0 #d4d0c8,inset -1px -1px 0 #404040,inset 2px 2px 0 #fff,inset -2px -2px 0 #808080;"></div>
<svg class="a" style="left:872px;top:110px" width="9" height="5" viewBox="0 0 9 5"><path d="M0 5L4.5 0 9 5z" fill="#000"/></svg>
<div class="a" style="left:867px;top:123px;width:20px;height:58px;background:#d4d0c8;box-shadow:inset 1px 1px 0 #d4d0c8,inset -1px -1px 0 #404040,inset 2px 2px 0 #fff,inset -2px -2px 0 #808080;"></div>
<div class="a" style="left:867px;top:181px;width:20px;height:438px;background-color:#e8e4dc;background-image:repeating-conic-gradient(#fff 0 25%,#d4d0c8 0 50%);background-size:2px 2px"></div>
<div class="a" style="left:867px;top:619px;width:20px;height:20px;background:#d4d0c8;box-shadow:inset 1px 1px 0 #d4d0c8,inset -1px -1px 0 #404040,inset 2px 2px 0 #fff,inset -2px -2px 0 #808080;"></div>
<svg class="a" style="left:872px;top:627px" width="9" height="5" viewBox="0 0 9 5"><path d="M0 0L4.5 5 9 0z" fill="#000"/></svg>
<div class="a" style="left:129px;top:639px;width:738px;height:20px;background-color:#e8e4dc;background-image:repeating-conic-gradient(#fff 0 25%,#d4d0c8 0 50%);background-size:2px 2px"></div>
<div class="a" style="left:129px;top:639px;width:20px;height:20px;background:#d4d0c8;box-shadow:inset 1px 1px 0 #d4d0c8,inset -1px -1px 0 #404040,inset 2px 2px 0 #fff,inset -2px -2px 0 #808080;"></div>
<svg class="a" style="left:136px;top:644px" width="5" height="9" viewBox="0 0 5 9"><path d="M5 0L0 4.5 5 9z" fill="#000"/></svg>
<div class="a" style="left:149px;top:639px;width:252px;height:20px;background:#d4d0c8;box-shadow:inset 1px 1px 0 #d4d0c8,inset -1px -1px 0 #404040,inset 2px 2px 0 #fff,inset -2px -2px 0 #808080;"></div>
<div class="a" style="left:847px;top:639px;width:20px;height:20px;background:#d4d0c8;box-shadow:inset 1px 1px 0 #d4d0c8,inset -1px -1px 0 #404040,inset 2px 2px 0 #fff,inset -2px -2px 0 #808080;"></div>
<svg class="a" style="left:855px;top:644px" width="5" height="9" viewBox="0 0 5 9"><path d="M0 0L5 4.5 0 9z" fill="#000"/></svg>
<div class="a" style="left:867px;top:639px;width:20px;height:20px;background:#d4d0c8"></div>
<div class="a" style="left:1px;top:662px;width:888px;height:58px;background:#fff8f0;border-top:1px solid #808080;border-left:1px solid #808080;border-bottom:1px solid #fff;border-right:1px solid #fff;box-shadow:inset 1px 1px 0 #404040,inset -1px -1px 0 #d4d0c8"></div>
<div class="a m" style="left:7px;top:666px;">rax=&lt;kernel32.LoadLibraryW&gt;</div>
<div class="a m" style="left:7px;top:704px;">00000000001A003B</div>
<div class="a" style="left:890px;top:101px;width:425px;height:25px;background:#d4d0c8;box-shadow:inset 1px 1px 0 #fff,inset -1px -1px 0 #404040,inset -2px -2px 0 #808080;"></div>
<div class="a r" style="left:902px;top:107px;">Hide FPU</div>
<div class="a" style="left:890px;top:126px;width:425px;height:511px;background:#fff8f0;border-top:1px solid #808080;border-left:1px solid #808080;box-shadow:inset 1px 1px 0 #404040"></div>
<div class="a" style="left:892px;top:128px;width:413px;height:499px;overflow:hidden">
<div class="a r" style="left:8px;top:5px;"><span style="color:#000">RAX</span></div>
<div class="a" style="left:8px;top:16px;width:24px;height:2px;background:#008000"></div>
<div class="a r" style="left:56px;top:5px;"><span style="color:#ff0000">00000000778C6F80</span></div>
<div class="a r" style="left:224px;top:5px;"><span style="color:#000">&lt;kernel32.LoadLibraryW&gt;</span></div>
<div class="a r" style="left:8px;top:19px;"><span style="color:#000">RBX</span></div>
<div class="a r" style="left:56px;top:19px;"><span style="color:#000">000000000011F940</span></div>
<div class="a r" style="left:8px;top:33px;"><span style="color:#008000">RCX</span></div>
<div class="a r" style="left:56px;top:33px;"><span style="color:#000">0000000000090000</span></div>
<div class="a r" style="left:224px;top:33px;"><span style="color:#000">L"c:\\Users\\rui\\Documents</span></div>
<div class="a r" style="left:8px;top:47px;"><span style="color:#008000">RDX</span></div>
<div class="a r" style="left:56px;top:47px;"><span style="color:#000">0000000000000000</span></div>
<div class="a r" style="left:8px;top:61px;"><span style="color:#000">RBP</span></div>
<div class="a r" style="left:56px;top:61px;"><span style="color:#000">00000000FF270000</span></div>
<div class="a r" style="left:224px;top:61px;"><span style="color:#000">notepad.00000000FF270000</span></div>
<div class="a r" style="left:8px;top:75px;"><span style="color:#000">RSP</span></div>
<div class="a" style="left:8px;top:86px;width:24px;height:2px;background:#808000"></div>
<div class="a r" style="left:56px;top:75px;"><span style="color:#000">000000000011F840</span></div>
<div class="a r" style="left:8px;top:89px;"><span style="color:#000">RSI</span></div>
<div class="a r" style="left:56px;top:89px;"><span style="color:#000">0000000000000001</span></div>
<div class="a r" style="left:8px;top:103px;"><span style="color:#000">RDI</span></div>
<div class="a r" style="left:56px;top:103px;"><span style="color:#000">0000000000000000</span></div>
<div class="a r" style="left:8px;top:131px;"><span style="color:#008000">R8</span></div>
<div class="a r" style="left:56px;top:131px;"><span style="color:#000">000000000011F8C8</span></div>
<div class="a r" style="left:8px;top:145px;"><span style="color:#008000">R9</span></div>
<div class="a r" style="left:56px;top:145px;"><span style="color:#000">00000000FF270000</span></div>
<div class="a r" style="left:224px;top:145px;"><span style="color:#000">notepad.00000000FF270000</span></div>
<div class="a r" style="left:8px;top:159px;"><span style="color:#000">R10</span></div>
<div class="a r" style="left:56px;top:159px;"><span style="color:#000">0000000000000000</span></div>
<div class="a r" style="left:8px;top:173px;"><span style="color:#000">R11</span></div>
<div class="a r" style="left:56px;top:173px;"><span style="color:#000">0000000000000244</span></div>
<div class="a r" style="left:224px;top:173px;"><span style="color:#000">L'Ʉ'</span></div>
<div class="a r" style="left:8px;top:187px;"><span style="color:#000">R12</span></div>
<div class="a r" style="left:56px;top:187px;"><span style="color:#000">0000000000000000</span></div>
<div class="a r" style="left:8px;top:201px;"><span style="color:#000">R13</span></div>
<div class="a r" style="left:56px;top:201px;"><span style="color:#000">0000000000000000</span></div>
<div class="a r" style="left:8px;top:215px;"><span style="color:#000">R14</span></div>
<div class="a r" style="left:56px;top:215px;"><span style="color:#000">0000000000000000</span></div>
<div class="a r" style="left:8px;top:229px;"><span style="color:#000">R15</span></div>
<div class="a r" style="left:56px;top:229px;"><span style="color:#000">0000000000000000</span></div>
<div class="a r" style="left:8px;top:257px;"><span style="color:#000">RIP</span></div>
<div class="a r" style="left:56px;top:257px;"><span style="color:#ff0000">00000000001A003B</span></div>
<div class="a r" style="left:8px;top:285px;">RFLAGS   0000000000000246</div>
<div class="a r" style="left:8px;top:299px;">ZF 1  PF 1  AF 0</div>
<div class="a r" style="left:8px;top:313px;">OF 0  SF 0  DF 0</div>
<div class="a r" style="left:8px;top:327px;">CF 0  TF 0  IF 1</div>
<div class="a r" style="left:8px;top:355px;">LastError 00000000 (ERROR_SUCCESS)</div>
<div class="a r" style="left:8px;top:383px;">GS 002B  FS 0053</div>
<div class="a r" style="left:8px;top:397px;">ES 002B  DS 002B</div>
<div class="a r" style="left:8px;top:411px;">CS 0033  SS 002B</div>
<div class="a r" style="left:8px;top:439px;">x87r0 00000000000000000000 ST0 Nonzero 0.0000000000000000000</div>
<div class="a r" style="left:8px;top:453px;">x87r1 00000000000000000000 ST1 Nonzero 0.0000000000000000000</div>
<div class="a r" style="left:8px;top:467px;">x87r2 00000000000000000000 ST2 Nonzero 0.0000000000000000000</div>
<div class="a r" style="left:8px;top:481px;">x87r3 00000000000000000000 ST3 Nonzero 0.0000000000000000000</div>
<div class="a r" style="left:8px;top:495px;">x87r4 00000000000000000000 ST4 Nonzero 0.0000000000000000000</div>
</div>
<div class="a" style="left:891px;top:627px;width:414px;height:10px;background-color:#f0f0f0;background-image:repeating-conic-gradient(#fff 0 25%,#e0e0e0 0 50%);background-size:2px 2px;border:1px solid #808080"></div>
<div class="a" style="left:892px;top:628px;width:169px;height:8px;background:#a8a8a8;border:1px solid #fff"></div>
<div class="a" style="left:1305px;top:126px;width:10px;height:501px;background-color:#f0f0f0;background-image:repeating-conic-gradient(#fff 0 25%,#e0e0e0 0 50%);background-size:2px 2px;border:1px solid #808080"></div>
<div class="a" style="left:1306px;top:127px;width:8px;height:154px;background:#a8a8a8;border:1px solid #fff"></div>
<div class="a" style="left:1305px;top:627px;width:10px;height:10px;background:#d4d0c8"></div>
<div class="a" style="left:891px;top:637px;width:299px;height:23px;background:#fff;border-top:1px solid #808080;border-left:1px solid #808080;border-bottom:1px solid #fff;border-right:1px solid #fff;box-shadow:inset 1px 1px 0 #404040,inset -1px -1px 0 #d4d0c8"></div>
<div class="a s" style="left:894px;top:642px;font-size:13px;line-height:15px;letter-spacing:0.1px">Default (x64 fastcall)</div>
<div class="a" style="left:1171px;top:639px;width:17px;height:19px;background:#d4d0c8;box-shadow:inset 1px 1px 0 #d4d0c8,inset -1px -1px 0 #404040,inset 2px 2px 0 #fff,inset -2px -2px 0 #808080;"></div>
<svg class="a" style="left:1175px;top:646px" width="8" height="5" viewBox="0 0 8 5"><path d="M0 0h8L4 4.5z" fill="#000"/></svg>
<div class="a" style="left:1193px;top:637px;width:39px;height:23px;background:#fff;border-top:1px solid #808080;border-left:1px solid #808080;border-bottom:1px solid #fff;border-right:1px solid #fff;box-shadow:inset 1px 1px 0 #404040,inset -1px -1px 0 #d4d0c8"></div>
<div class="a s" style="left:1196px;top:642px;font-size:13px;line-height:15px">5</div>
<div class="a" style="left:1214px;top:639px;width:16px;height:10px;background:#d4d0c8;box-shadow:inset 1px 1px 0 #d4d0c8,inset -1px -1px 0 #404040,inset 2px 2px 0 #fff,inset -2px -2px 0 #808080;"></div>
<div class="a" style="left:1214px;top:649px;width:16px;height:9px;background:#d4d0c8;box-shadow:inset 1px 1px 0 #d4d0c8,inset -1px -1px 0 #404040,inset 2px 2px 0 #fff,inset -2px -2px 0 #808080;"></div>
<svg class="a" style="left:1219px;top:642px" width="6" height="4" viewBox="0 0 6 4"><path d="M0 4L3 0 6 4z" fill="#000"/></svg>
<svg class="a" style="left:1219px;top:652px" width="6" height="4" viewBox="0 0 6 4"><path d="M0 0L3 4 6 0z" fill="#000"/></svg>
<div class="a" style="left:1236px;top:641px;width:16px;height:16px;background:#fff;border-top:1px solid #808080;border-left:1px solid #808080;border-bottom:1px solid #fff;border-right:1px solid #fff;box-shadow:inset 1px 1px 0 #404040,inset -1px -1px 0 #d4d0c8"></div>
<div class="a s" style="left:1258px;top:642px;font-size:13px;line-height:15px;letter-spacing:-0.4px">Unlocked</div>
<div class="a" style="left:890px;top:660px;width:425px;height:60px;background:#fff8f0;border-top:1px solid #808080;border-left:1px solid #808080;border-bottom:1px solid #fff;border-right:1px solid #fff;box-shadow:inset 1px 1px 0 #404040,inset -1px -1px 0 #d4d0c8"></div>
<div class="a" style="left:892px;top:662px;width:411px;height:13px;background:#c0c0c0"></div>
<div class="a" style="left:892px;top:662px;width:411px;height:45px;overflow:hidden">
<div class="a m" style="left:4px;top:1px;">1: rcx 0000000000090000 L"c:\\Users\\rui\\Documents\\Visual Studio 2013</div>
<div class="a m" style="left:4px;top:14px;">2: rdx 0000000000000000</div>
<div class="a m" style="left:4px;top:27px;">3: r8 000000000011F8C8</div>
<div class="a m" style="left:4px;top:40px;">4: r9 00000000FF270000 notepad.00000000FF270000</div>
</div>
<div class="a" style="left:1303px;top:662px;width:10px;height:46px;background-color:#f0f0f0;background-image:repeating-conic-gradient(#fff 0 25%,#e0e0e0 0 50%);background-size:2px 2px;border:1px solid #808080"></div>
<div class="a" style="left:1304px;top:663px;width:8px;height:41px;background:#a8a8a8;border:1px solid #fff"></div>
<div class="a" style="left:892px;top:708px;width:411px;height:10px;background-color:#f0f0f0;background-image:repeating-conic-gradient(#fff 0 25%,#e0e0e0 0 50%);background-size:2px 2px;border:1px solid #808080"></div>
<div class="a" style="left:893px;top:709px;width:357px;height:8px;background:#a8a8a8;border:1px solid #fff"></div>
<div class="a" style="left:1303px;top:708px;width:10px;height:10px;background:#d4d0c8"></div>
<div class="a" style="left:1px;top:721px;width:98px;height:27px;background:#d4d0c8;border-top:1px solid #fff;border-left:1px solid #fff;border-right:1px solid #404040;box-shadow:inset -1px 0 0 #808080;border-top-left-radius:2px"></div>
<div class="a" style="left:99px;top:724px;width:98px;height:24px;background:#d4d0c8;border-top:1px solid #fff;border-left:1px solid #fff;border-right:1px solid #404040;box-shadow:inset -1px 0 0 #808080;border-top-left-radius:2px"></div>
<div class="a" style="left:197px;top:724px;width:98px;height:24px;background:#d4d0c8;border-top:1px solid #fff;border-left:1px solid #fff;border-right:1px solid #404040;box-shadow:inset -1px 0 0 #808080;border-top-left-radius:2px"></div>
<div class="a" style="left:295px;top:724px;width:98px;height:24px;background:#d4d0c8;border-top:1px solid #fff;border-left:1px solid #fff;border-right:1px solid #404040;box-shadow:inset -1px 0 0 #808080;border-top-left-radius:2px"></div>
<div class="a" style="left:393px;top:724px;width:98px;height:24px;background:#d4d0c8;border-top:1px solid #fff;border-left:1px solid #fff;border-right:1px solid #404040;box-shadow:inset -1px 0 0 #808080;border-top-left-radius:2px"></div>
<div class="a" style="left:491px;top:724px;width:101px;height:24px;background:#d4d0c8;border-top:1px solid #fff;border-left:1px solid #fff;border-right:1px solid #404040;box-shadow:inset -1px 0 0 #808080;border-top-left-radius:2px"></div>
<div class="a" style="left:592px;top:724px;width:89px;height:24px;background:#d4d0c8;border-top:1px solid #fff;border-left:1px solid #fff;border-right:1px solid #404040;box-shadow:inset -1px 0 0 #808080;border-top-left-radius:2px"></div>
<div class="a" style="left:681px;top:724px;width:86px;height:24px;background:#d4d0c8;border-top:1px solid #fff;border-left:1px solid #fff;border-right:1px solid #404040;box-shadow:inset -1px 0 0 #808080;border-top-left-radius:2px"></div>
<svg class="a" style="left:16px;top:728px" width="16" height="14" viewBox="0 0 16 14"><rect x="5" y=".5" width="10.5" height="10" rx="1" fill="#e4e6ee" stroke="#8a8a90" stroke-width=".8"/><path d="M7.5 1v9M10 1v9M12.5 1v9" stroke="#a0a4b0" stroke-width=".9"/><rect x=".5" y="2.5" width="4.5" height="8" fill="#f5b820" stroke="#b08010" stroke-width=".6"/><rect x="1" y="4" width="2" height="3" fill="#5a8ad0"/><circle cx="3" cy="11.5" r="1.9" fill="#fff" stroke="#222" stroke-width="1.1"/><circle cx="13" cy="11.5" r="1.9" fill="#fff" stroke="#222" stroke-width="1.1"/></svg>
<div class="a s" style="left:38px;top:728px;font-size:13px;letter-spacing:-0.3px;line-height:15px">Dump 1</div>
<svg class="a" style="left:114px;top:728px" width="16" height="14" viewBox="0 0 16 14"><rect x="5" y=".5" width="10.5" height="10" rx="1" fill="#e4e6ee" stroke="#8a8a90" stroke-width=".8"/><path d="M7.5 1v9M10 1v9M12.5 1v9" stroke="#a0a4b0" stroke-width=".9"/><rect x=".5" y="2.5" width="4.5" height="8" fill="#f5b820" stroke="#b08010" stroke-width=".6"/><rect x="1" y="4" width="2" height="3" fill="#5a8ad0"/><circle cx="3" cy="11.5" r="1.9" fill="#fff" stroke="#222" stroke-width="1.1"/><circle cx="13" cy="11.5" r="1.9" fill="#fff" stroke="#222" stroke-width="1.1"/></svg>
<div class="a s" style="left:136px;top:729px;font-size:13px;letter-spacing:-0.3px;line-height:15px">Dump 2</div>
<svg class="a" style="left:212px;top:728px" width="16" height="14" viewBox="0 0 16 14"><rect x="5" y=".5" width="10.5" height="10" rx="1" fill="#e4e6ee" stroke="#8a8a90" stroke-width=".8"/><path d="M7.5 1v9M10 1v9M12.5 1v9" stroke="#a0a4b0" stroke-width=".9"/><rect x=".5" y="2.5" width="4.5" height="8" fill="#f5b820" stroke="#b08010" stroke-width=".6"/><rect x="1" y="4" width="2" height="3" fill="#5a8ad0"/><circle cx="3" cy="11.5" r="1.9" fill="#fff" stroke="#222" stroke-width="1.1"/><circle cx="13" cy="11.5" r="1.9" fill="#fff" stroke="#222" stroke-width="1.1"/></svg>
<div class="a s" style="left:233px;top:729px;font-size:13px;letter-spacing:-0.3px;line-height:15px">Dump 3</div>
<svg class="a" style="left:309px;top:728px" width="16" height="14" viewBox="0 0 16 14"><rect x="5" y=".5" width="10.5" height="10" rx="1" fill="#e4e6ee" stroke="#8a8a90" stroke-width=".8"/><path d="M7.5 1v9M10 1v9M12.5 1v9" stroke="#a0a4b0" stroke-width=".9"/><rect x=".5" y="2.5" width="4.5" height="8" fill="#f5b820" stroke="#b08010" stroke-width=".6"/><rect x="1" y="4" width="2" height="3" fill="#5a8ad0"/><circle cx="3" cy="11.5" r="1.9" fill="#fff" stroke="#222" stroke-width="1.1"/><circle cx="13" cy="11.5" r="1.9" fill="#fff" stroke="#222" stroke-width="1.1"/></svg>
<div class="a s" style="left:331px;top:729px;font-size:13px;letter-spacing:-0.3px;line-height:15px">Dump 4</div>
<svg class="a" style="left:408px;top:728px" width="16" height="14" viewBox="0 0 16 14"><rect x="5" y=".5" width="10.5" height="10" rx="1" fill="#e4e6ee" stroke="#8a8a90" stroke-width=".8"/><path d="M7.5 1v9M10 1v9M12.5 1v9" stroke="#a0a4b0" stroke-width=".9"/><rect x=".5" y="2.5" width="4.5" height="8" fill="#f5b820" stroke="#b08010" stroke-width=".6"/><rect x="1" y="4" width="2" height="3" fill="#5a8ad0"/><circle cx="3" cy="11.5" r="1.9" fill="#fff" stroke="#222" stroke-width="1.1"/><circle cx="13" cy="11.5" r="1.9" fill="#fff" stroke="#222" stroke-width="1.1"/></svg>
<div class="a s" style="left:429px;top:729px;font-size:13px;letter-spacing:-0.3px;line-height:15px">Dump 5</div>
<svg class="a" style="left:506px;top:727px" width="15" height="15" viewBox="0 0 15 15"><circle cx="3.8" cy="4" r="3.2" fill="#c8843e"/><circle cx="11.2" cy="4" r="3.2" fill="#c8843e"/><circle cx="3.8" cy="4.3" r="1.6" fill="#f0c890"/><circle cx="11.2" cy="4.3" r="1.6" fill="#f0c890"/><ellipse cx="7.5" cy="8.8" rx="7" ry="5.9" fill="#d99a55"/><ellipse cx="7.5" cy="11.3" rx="4.6" ry="3.2" fill="#f6dcae"/><circle cx="5.2" cy="8.6" r="1.1" fill="#222"/><circle cx="9.8" cy="8.6" r="1.1" fill="#222"/><ellipse cx="7.5" cy="11" rx="1.6" ry="1.1" fill="#2a2030"/></svg>
<div class="a s" style="left:527px;top:729px;font-size:13px;letter-spacing:-0.3px;line-height:15px">Watch 1</div>
<svg class="a" style="left:606px;top:731px" width="18" height="11" viewBox="0 0 18 11"><path d="M2.5 .8H1.3v9.4h1.2M15.5 .8h1.2v9.4h-1.2" fill="none" stroke="#111" stroke-width="1.2"/><text x="3" y="8.3" font-family="Liberation Serif" font-style="italic" font-size="9.5" fill="#9a2020">x</text><path d="M9.5 4.6h4.6M9.5 6.6h4.6" stroke="#555" stroke-width="1"/></svg>
<div class="a s" style="left:629px;top:729px;font-size:13px;letter-spacing:-0.3px;line-height:15px">Locals</div>
<svg class="a" style="left:697px;top:726px" width="14" height="17" viewBox="0 0 14 17"><path d="M3.2 6.2C3 3 5.2 1.3 8 1.3S12.6 3.2 12.2 6C11.8 8.5 10.2 10 8.2 12L2.6 15.8" fill="none" stroke="#fff" stroke-width="3" stroke-linecap="round"/><path d="M3.2 6.2C3 3 5.2 1.3 8 1.3S12.6 3.2 12.2 6C11.8 8.5 10.2 10 8.2 12L2.6 15.8" fill="none" stroke="#e02828" stroke-width="3" stroke-dasharray="1.8 1.8"/></svg>
<div class="a s" style="left:717px;top:729px;font-size:13px;letter-spacing:-0.3px;line-height:15px">Struct</div>
<div class="a" style="left:1px;top:749px;width:795px;height:99px;background:#fff8f0;border-top:1px solid #808080;border-left:1px solid #808080;border-bottom:1px solid #fff;border-right:1px solid #fff;box-shadow:inset 1px 1px 0 #404040,inset -1px -1px 0 #d4d0c8"></div>
<div class="a" style="left:3px;top:751px;width:771px;height:16px;background:#c0c0c0"></div>
<div class="a" style="left:3px;top:766px;width:771px;height:1px;background:#808080"></div>
<div class="a" style="left:138px;top:751px;width:1px;height:16px;background:#808080"></div>
<div class="a" style="left:139px;top:751px;width:1px;height:16px;background:#fff"></div>
<div class="a" style="left:522px;top:751px;width:1px;height:16px;background:#808080"></div>
<div class="a" style="left:523px;top:751px;width:1px;height:16px;background:#fff"></div>
<div class="a" style="left:594px;top:751px;width:1px;height:16px;background:#808080"></div>
<div class="a" style="left:595px;top:751px;width:1px;height:16px;background:#fff"></div>
<div class="a m" style="left:7px;top:754px;">Address</div>
<div class="a m" style="left:144px;top:754px;">Hex</div>
<div class="a m" style="left:527px;top:754px;">UNICODE</div>
<div class="a" style="left:3px;top:767px;width:770px;height:81px;overflow:hidden">
<div class="a" style="left:137px;top:0px;width:23px;height:13px;background:#c0c0c0"></div>
<div class="a" style="left:524px;top:0px;width:8px;height:13px;background:#c0c0c0"></div>
<div class="a m" style="left:4px;top:2px;">0000000077AD1000</div>
<div class="a m" style="left:140px;top:2px;"><span style="color:#000">8B</span> <span style="color:#000">B3</span> <span style="color:#000">90</span> <span style="color:#008000">00</span></div>
<div class="a m" style="left:236px;top:2px;"><span style="color:#008000">00</span> <span style="color:#008000">00</span> <span style="color:#000">C1</span> <span style="color:#000">EE</span></div>
<div class="a m" style="left:332px;top:2px;"><span style="color:#000">15</span> <span style="color:#000">F7</span> <span style="color:#000">D6</span> <span style="color:#800080">41</span></div>
<div class="a m" style="left:428px;top:2px;"><span style="color:#800080">23</span> <span style="color:#000">F4</span> <span style="color:#000">E9</span> <span style="color:#000">19</span></div>
<div class="a m" style="left:524px;top:2px;">........</div>
<div class="a m" style="left:4px;top:15px;">0000000077AD1010</div>
<div class="a m" style="left:140px;top:15px;"><span style="color:#800080">50</span> <span style="color:#000">01</span> <span style="color:#008000">00</span> <span style="color:#000">B8</span></div>
<div class="a m" style="left:236px;top:15px;"><span style="color:#000">02</span> <span style="color:#008000">00</span> <span style="color:#008000">00</span> <span style="color:#008000">00</span></div>
<div class="a m" style="left:332px;top:15px;"><span style="color:#000">F0</span> <span style="color:#000">0F</span> <span style="color:#000">C1</span> <span style="color:#000">03</span></div>
<div class="a m" style="left:428px;top:15px;"><span style="color:#000">80</span> <span style="color:#800080">3C</span> <span style="color:#800080">25</span> <span style="color:#000">84</span></div>
<div class="a m" style="left:524px;top:15px;">........</div>
<div class="a m" style="left:4px;top:28px;">0000000077AD1020</div>
<div class="a m" style="left:140px;top:28px;"><span style="color:#000">03</span> <span style="color:#000">FE</span> <span style="color:#808000">7F</span> <span style="color:#008000">00</span></div>
<div class="a m" style="left:236px;top:28px;"><span style="color:#000">0F</span> <span style="color:#000">85</span> <span style="color:#000">8E</span> <span style="color:#800080">4F</span></div>
<div class="a m" style="left:332px;top:28px;"><span style="color:#000">07</span> <span style="color:#008000">00</span> <span style="color:#800080">44</span> <span style="color:#000">8B</span></div>
<div class="a m" style="left:428px;top:28px;"><span style="color:#000">83</span> <span style="color:#000">A8</span> <span style="color:#008000">00</span> <span style="color:#008000">00</span></div>
<div class="a m" style="left:524px;top:28px;">........</div>
<div class="a m" style="left:4px;top:41px;">0000000077AD1030</div>
<div class="a m" style="left:140px;top:41px;"><span style="color:#008000">00</span> <span style="color:#800080">48</span> <span style="color:#000">8B</span> <span style="color:#800080">53</span></div>
<div class="a m" style="left:236px;top:41px;"><span style="color:#800080">78</span> <span style="color:#800080">48</span> <span style="color:#000">8D</span> <span style="color:#000">8B</span></div>
<div class="a m" style="left:332px;top:41px;"><span style="color:#000">B0</span> <span style="color:#008000">00</span> <span style="color:#008000">00</span> <span style="color:#008000">00</span></div>
<div class="a m" style="left:428px;top:41px;"><span style="color:#800080">45</span> <span style="color:#800080">33</span> <span style="color:#000">C9</span> <span style="color:#000">E8</span></div>
<div class="a m" style="left:524px;top:41px;">....°...</div>
<div class="a m" style="left:4px;top:54px;">0000000077AD1040</div>
<div class="a m" style="left:140px;top:54px;"><span style="color:#800080">5C</span> <span style="color:#000">FD</span> <span style="color:#000">01</span> <span style="color:#008000">00</span></div>
<div class="a m" style="left:236px;top:54px;"><span style="color:#000">F0</span> <span style="color:#000">83</span> <span style="color:#000">03</span> <span style="color:#800000">FF</span></div>
<div class="a m" style="left:332px;top:54px;"><span style="color:#000">0F</span> <span style="color:#000">85</span> <span style="color:#000">FB</span> <span style="color:#800080">4F</span></div>
<div class="a m" style="left:428px;top:54px;"><span style="color:#000">01</span> <span style="color:#008000">00</span> <span style="color:#000">E9</span> <span style="color:#000">8C</span></div>
<div class="a m" style="left:524px;top:54px;">........</div>
<div class="a m" style="left:4px;top:67px;">0000000077AD1050</div>
<div class="a m" style="left:140px;top:67px;"><span style="color:#800080">4F</span> <span style="color:#000">07</span> <span style="color:#008000">00</span> <span style="color:#800080">48</span></div>
<div class="a m" style="left:236px;top:67px;"><span style="color:#000">8B</span> <span style="color:#800080">40</span> <span style="color:#800080">48</span> <span style="color:#800080">48</span></div>
<div class="a m" style="left:332px;top:67px;"><span style="color:#800080">39</span> <span style="color:#800080">41</span> <span style="color:#000">10</span> <span style="color:#000">0F</span></div>
<div class="a m" style="left:428px;top:67px;"><span style="color:#000">84</span> <span style="color:#000">D6</span> <span style="color:#000">E7</span> <span style="color:#000">05</span></div>
<div class="a m" style="left:524px;top:67px;">........</div>
<div class="a m" style="left:4px;top:80px;">0000000077AD1060</div>
<div class="a m" style="left:140px;top:80px;"><span style="color:#000">01</span> <span style="color:#000">0F</span> <span style="color:#000">84</span> <span style="color:#808000">7F</span></div>
<div class="a m" style="left:236px;top:80px;"><span style="color:#008000">00</span> <span style="color:#008000">00</span> <span style="color:#008000">00</span> <span style="color:#800080">48</span></div>
<div class="a m" style="left:332px;top:80px;"><span style="color:#000">8B</span> <span style="color:#000">01</span> <span style="color:#800080">48</span> <span style="color:#800080">33</span></div>
<div class="a m" style="left:428px;top:80px;"><span style="color:#000">F6</span> <span style="color:#800080">48</span> <span style="color:#800080">39</span> <span style="color:#800080">40</span></div>
<div class="a m" style="left:524px;top:80px;">........</div>
<div class="a" style="left:136px;top:0px;width:1px;height:81px;background:#808080"></div>
<div class="a" style="left:232px;top:0px;width:1px;height:81px;background:#808080"></div>
<div class="a" style="left:328px;top:0px;width:1px;height:81px;background:#808080"></div>
<div class="a" style="left:424px;top:0px;width:1px;height:81px;background:#808080"></div>
<div class="a" style="left:520px;top:0px;width:1px;height:81px;background:#808080"></div>
<div class="a" style="left:592px;top:0px;width:1px;height:81px;background:#808080"></div>
</div>
<div class="a" style="left:773px;top:751px;width:19px;height:18px;background:#d4d0c8;box-shadow:inset 1px 1px 0 #d4d0c8,inset -1px -1px 0 #404040,inset 2px 2px 0 #fff,inset -2px -2px 0 #808080;"></div>
<svg class="a" style="left:778px;top:757px" width="9" height="5" viewBox="0 0 9 5"><path d="M0 5L4.5 0 9 5z" fill="#000"/></svg>
<div class="a" style="left:773px;top:769px;width:19px;height:12px;background:#d4d0c8;box-shadow:inset 1px 1px 0 #d4d0c8,inset -1px -1px 0 #404040,inset 2px 2px 0 #fff,inset -2px -2px 0 #808080;"></div>
<div class="a" style="left:773px;top:781px;width:19px;height:67px;background-color:#e8e4dc;background-image:repeating-conic-gradient(#fff 0 25%,#d4d0c8 0 50%);background-size:2px 2px"></div>
<div class="a" style="left:795px;top:721px;width:520px;height:130px;background:#fff8f0;border-top:1px solid #808080;border-left:1px solid #808080;border-bottom:1px solid #fff;border-right:1px solid #fff;box-shadow:inset 1px 1px 0 #404040,inset -1px -1px 0 #d4d0c8"></div>
<div class="a" style="left:797px;top:722px;width:496px;height:126px;overflow:hidden">
<div class="a" style="left:0px;top:1px;width:496px;height:13px;background:#c0c0c0"></div>
<div class="a" style="left:0px;top:1px;width:135px;height:13px;background:#000"></div>
<div class="a m" style="left:4px;top:2px;"><span style="color:#fff">000000000011F840</span></div>
<div class="a m" style="left:139px;top:2px;">FFFFFFFF00000000</div>
<div class="a m" style="left:4px;top:15px;"><span style="color:#808080">000000000011F848</span></div>
<div class="a m" style="left:139px;top:15px;">00000000FF270000</div>
<div class="a m" style="left:278px;top:15px;">notepad.00000000FF270000</div>
<div class="a m" style="left:4px;top:28px;"><span style="color:#808080">000000000011F850</span></div>
<div class="a m" style="left:139px;top:28px;">0000000000000001</div>
<div class="a m" style="left:4px;top:41px;"><span style="color:#808080">000000000011F858</span></div>
<div class="a m" style="left:139px;top:41px;">0000000000000000</div>
<div class="a m" style="left:4px;top:54px;"><span style="color:#808080">000000000011F860</span></div>
<div class="a m" style="left:139px;top:54px;">0000000000000000</div>
<div class="a m" style="left:4px;top:67px;"><span style="color:#808080">000000000011F868</span></div>
<div class="a m" style="left:139px;top:67px;">0000000000000244</div>
<div class="a m" style="left:4px;top:80px;"><span style="color:#808080">000000000011F870</span></div>
<div class="a m" style="left:139px;top:80px;">0000000000000000</div>
<div class="a m" style="left:4px;top:93px;"><span style="color:#808080">000000000011F878</span></div>
<div class="a m" style="left:139px;top:93px;">00000000FF270000</div>
<div class="a m" style="left:278px;top:93px;">notepad.00000000FF270000</div>
<div class="a m" style="left:4px;top:106px;"><span style="color:#808080">000000000011F880</span></div>
<div class="a m" style="left:139px;top:106px;">000000000011F8C8</div>
<div class="a m" style="left:4px;top:119px;"><span style="color:#808080">000000000011F888</span></div>
<div class="a m" style="left:139px;top:119px;">0000000000000000</div>
<div class="a" style="left:135px;top:0px;width:1px;height:126px;background:#808080"></div>
<div class="a" style="left:273px;top:0px;width:1px;height:126px;background:#808080"></div>
</div>
<div class="a" style="left:1293px;top:723px;width:20px;height:125px;background-color:#e8e4dc;background-image:repeating-conic-gradient(#fff 0 25%,#d4d0c8 0 50%);background-size:2px 2px"></div>
<div class="a" style="left:1293px;top:723px;width:20px;height:20px;background:#d4d0c8;box-shadow:inset 1px 1px 0 #d4d0c8,inset -1px -1px 0 #404040,inset 2px 2px 0 #fff,inset -2px -2px 0 #808080;"></div>
<svg class="a" style="left:1298px;top:730px" width="9" height="5" viewBox="0 0 9 5"><path d="M0 5L4.5 0 9 5z" fill="#000"/></svg>
<div class="a" style="left:501px;top:467px;width:200px;height:163px;background:#d4d0c8;box-shadow:inset 1px 1px 0 #d4d0c8,inset -1px -1px 0 #404040,inset 2px 2px 0 #fff,inset -2px -2px 0 #808080"></div>
<div class="a" style="left:504px;top:470px;width:194px;height:24px;background:linear-gradient(to right,#0a246a,#a6caf0)"></div>
<div class="a s" style="left:506px;top:473px;color:#fff;font-weight:bold;font-size:14.5px;line-height:17px;letter-spacing:0px">Inject All The Things!</div>
<div class="a" style="left:675px;top:472px;width:21px;height:20px;background:#d4d0c8;box-shadow:inset 1px 1px 0 #fff,inset -1px -1px 0 #404040,inset -2px -2px 0 #808080;"></div>
<svg class="a" style="left:680px;top:476px" width="11" height="11" viewBox="0 0 11 11"><path d="M1 1L10 10M10 1L1 10" stroke="#000" stroke-width="1.8"/></svg>
<div class="a" style="left:504px;top:494px;width:194px;height:78px;background:#fff"></div>
<div class="a s" style="left:518px;top:527px;font-size:13.6px;line-height:16px">Process attach!</div>
<div class="a" style="left:590px;top:584px;width:100px;height:30px;background:#d4d0c8;border:1px solid #000;box-shadow:inset 1px 1px 0 #fff,inset -1px -1px 0 #404040,inset -2px -2px 0 #808080"></div>
<div class="a" style="left:595px;top:589px;width:90px;height:20px;border:1px dotted #000"></div>
<div class="a s" style="left:630px;top:591px;font-size:13px;line-height:16px">OK</div>
<div class="a s" style="left:1147px;top:821px;font-size:14px;line-height:17px;letter-spacing:0.4px;color:#4a4a4a;text-shadow:1px 0 0 rgba(255,255,255,.8),-1px 0 0 rgba(255,255,255,.8),0 1px 0 rgba(255,255,255,.8),0 -1px 0 rgba(255,255,255,.8)">安全客 ( bobao.360.cn )</div>
</body></html>
